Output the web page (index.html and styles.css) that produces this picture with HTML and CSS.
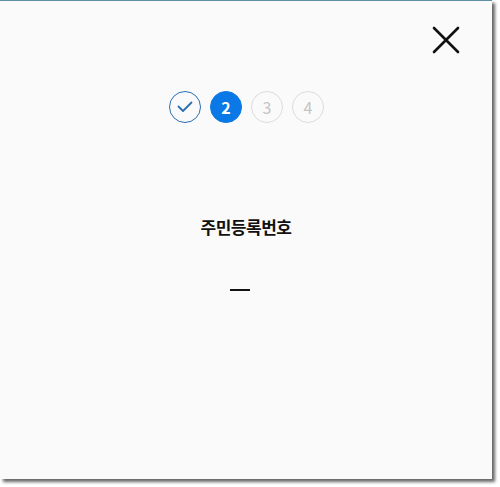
FILE: index.html
```html
<!DOCTYPE html>
<html lang="ko">
<head>
<meta charset="utf-8">
<link rel="stylesheet" href="styles.css">
</head>
<body>
<div class="window">
  <header class="topbar">
    <button class="close" aria-label="닫기">
      <svg width="28" height="28" viewBox="0 0 28 28"><path d="M2 2 L26 26 M26 2 L2 26" stroke="#111" stroke-width="2.6" stroke-linecap="round" fill="none"/></svg>
    </button>
  </header>
  <ol class="steps">
    <li class="step done">
      <svg width="16" height="12" viewBox="0 0 16 12"><path d="M1.5 5.5 L6 10 L14.5 1.5" stroke="#2a6fb3" stroke-width="1.8" fill="none" stroke-linecap="round" stroke-linejoin="round"/></svg>
    </li>
    <li class="step active">2</li>
    <li class="step">3</li>
    <li class="step">4</li>
  </ol>
  <h1 class="title">주민등록번호</h1>
  <div class="field"><span class="dash"></span></div>
</div>
</body>
</html>
```
FILE: styles.css
```css
html, body {
  margin: 0;
  padding: 0;
  background: #ffffff;
}
body {
  font-family: "Noto Sans CJK KR", "Noto Sans", sans-serif;
  width: 500px;
  height: 487px;
  overflow: hidden;
}
.window {
  width: 492px;
  height: 479px;
  background: #fafafa;
  border-top: 1px solid #5f8fa3;
  box-sizing: border-box;
  box-shadow: 3px 3px 3px rgba(0,0,0,0.6);
  display: flex;
  flex-direction: column;
  align-items: center;
}
.topbar {
  align-self: stretch;
  display: flex;
  justify-content: flex-end;
  padding: 25px 32px 0 0;
  height: 58px;
  box-sizing: border-box;
}
.close {
  border: 0;
  background: none;
  padding: 0;
  width: 28px;
  height: 28px;
  cursor: pointer;
}
.steps {
  list-style: none;
  margin: 32px 0 0 1px;
  padding: 0;
  display: flex;
  gap: 9px;
}
.step {
  width: 32px;
  height: 32px;
  box-sizing: border-box;
  border-radius: 50%;
  border: 1.5px solid #dcdcdc;
  color: #c4c4c4;
  font-size: 16px;
  font-weight: 400;
  display: flex;
  align-items: center;
  justify-content: center;
}
.step.done {
  border: 1.5px solid #2a6fb3;
}
.step.active {
  background: #0a79e6;
  border-color: #0a79e6;
  color: #ffffff;
  font-weight: 700;
}
.title {
  margin: 92px 0 0 0;
  font-size: 17px;
  font-weight: 700;
  color: #111;
  line-height: 24px;
  letter-spacing: -0.5px;
}
.field {
  margin: 41px 0 0 -13px;
  height: 20px;
  display: flex;
  align-items: center;
}
.dash {
  display: block;
  width: 20px;
  height: 2px;
  background: #111;
}
```
